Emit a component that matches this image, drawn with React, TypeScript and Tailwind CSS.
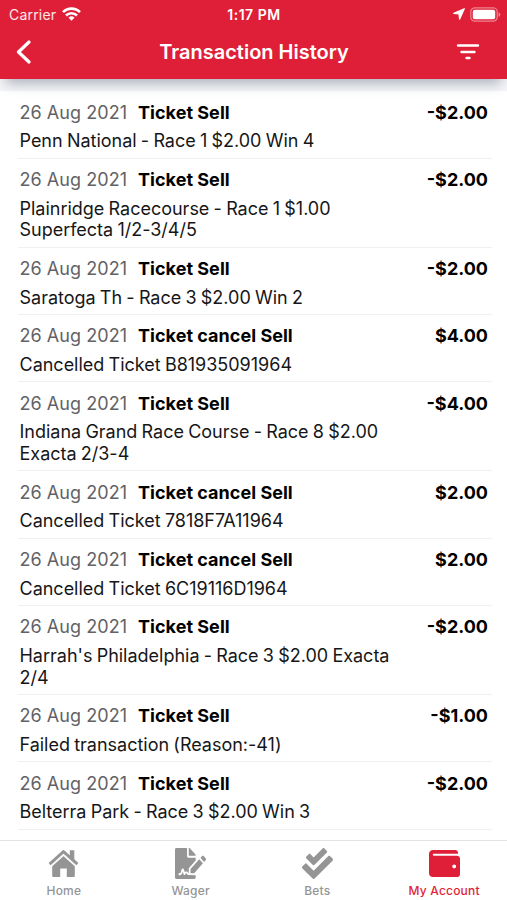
import { FaCheckDouble, FaFileSignature, FaWallet } from 'react-icons/fa'

interface Transaction {
  date: string
  type: string
  description: string
  amount: string
}

const transactions: Transaction[] = [
  { date: '26 Aug 2021', type: 'Ticket Sell', description: 'Penn National - Race 1 $2.00 Win 4', amount: '-$2.00' },
  { date: '26 Aug 2021', type: 'Ticket Sell', description: 'Plainridge Racecourse - Race 1 $1.00 Superfecta 1/2-3/4/5', amount: '-$2.00' },
  { date: '26 Aug 2021', type: 'Ticket Sell', description: 'Saratoga Th - Race 3 $2.00 Win 2', amount: '-$2.00' },
  { date: '26 Aug 2021', type: 'Ticket cancel Sell', description: 'Cancelled Ticket B81935091964', amount: '$4.00' },
  { date: '26 Aug 2021', type: 'Ticket Sell', description: 'Indiana Grand Race Course - Race 8 $2.00 Exacta 2/3-4', amount: '-$4.00' },
  { date: '26 Aug 2021', type: 'Ticket cancel Sell', description: 'Cancelled Ticket 7818F7A11964', amount: '$2.00' },
  { date: '26 Aug 2021', type: 'Ticket cancel Sell', description: 'Cancelled Ticket 6C19116D1964', amount: '$2.00' },
  { date: '26 Aug 2021', type: 'Ticket Sell', description: "Harrah's Philadelphia - Race 3 $2.00 Exacta 2/4", amount: '-$2.00' },
  { date: '26 Aug 2021', type: 'Ticket Sell', description: 'Failed transaction (Reason:-41)', amount: '-$1.00' },
  { date: '26 Aug 2021', type: 'Ticket Sell', description: 'Belterra Park - Race 3 $2.00 Win 3', amount: '-$2.00' },
]

function HomeIcon() {
  return (
    <svg width="31" height="31" viewBox="0 0 31 31" fill="currentColor">
      <path d="M4.2 16.8 15.5 6.8l11.3 10v10.9c0 .8-.5 1.3-1.3 1.3h-6.7v-8.5h-6.6V29H5.5c-.8 0-1.3-.5-1.3-1.3Z" />
      <path d="M3.2 18.2 15.5 7.2l12.3 11" fill="none" stroke="white" strokeWidth="1.3" />
      <path d="M21.8 2.2h4.5v10.6l-4.5-4Z" />
      <path d="M1.6 16.1 15.5 3.6l13.9 12.5" fill="none" stroke="currentColor" strokeWidth="2.9" strokeLinejoin="round" />
    </svg>
  )
}

const tabs = [
  { label: 'Home', icon: <HomeIcon />, active: false },
  { label: 'Wager', icon: <FaFileSignature size={31} preserveAspectRatio="none" />, active: false },
  { label: 'Bets', icon: <FaCheckDouble size={31} />, active: false },
  { label: 'My Account', icon: <FaWallet size={31} />, active: true },
]

function StatusBar() {
  return (
    <div className="grid h-7 grid-cols-3 items-center pl-[9px] pr-[8px] text-[14px] text-white">
      <div className="flex items-center gap-[6px]">
        <span className="tracking-[0.2px] text-white/90">Carrier</span>
        <svg width="19" height="14" viewBox="0 0 19 14" fill="none" stroke="currentColor" strokeWidth="2.6">
          <path d="M1 5.2a12 12 0 0 1 17 0" />
          <path d="M4 8.5a7.8 7.8 0 0 1 11 0" />
          <path d="M9.5 13.8 6.5 10.8a4.3 4.3 0 0 1 6 0Z" fill="currentColor" stroke="none" />
        </svg>
      </div>
      <span className="whitespace-nowrap text-center text-[14px] font-semibold tracking-[0.5px]">1:17 PM</span>
      <div className="-mr-[2px] flex items-center justify-end gap-[5px]">
        <svg width="12" height="12" viewBox="0 0 12 12" fill="currentColor">
          <path d="M11.3.7 6.6 11.2 6 6 .8 5.4Z" stroke="currentColor" strokeWidth="1.2" strokeLinejoin="round" />
        </svg>
        <svg width="31" height="15" viewBox="0 0 31 15" fill="none">
          <rect x=".8" y=".8" width="26.4" height="13.4" rx="4" stroke="white" strokeOpacity=".45" strokeWidth="1.2" />
          <rect x="2.8" y="2.8" width="22.4" height="9.4" rx="2" fill="white" />
          <path d="M28.6 5.2c2.2.8 2.2 3.8 0 4.6Z" fill="white" fillOpacity=".5" />
        </svg>
      </div>
    </div>
  )
}

function Header() {
  return (
    <header className="relative z-10 h-[79px] bg-[#df1f37] shadow-[0_10px_12px_-6px_rgba(40,50,70,0.36)]">
      <StatusBar />
      <div className="grid h-12 grid-cols-[1fr_auto_1fr] items-center pl-4 pr-[27px] text-white">
        <svg width="16" height="24" viewBox="0 0 16 24" fill="none" stroke="currentColor" strokeWidth="3.2" strokeLinecap="round" strokeLinejoin="round">
          <path d="M13 2 2.5 12 13 22" />
        </svg>
        <h1 className="pl-[12px] text-[20px] font-semibold">Transaction History</h1>
        <svg className="justify-self-end" width="24" height="18" viewBox="0 0 24 18" fill="none" stroke="currentColor" strokeWidth="2.4" strokeLinecap="round">
          <path d="M2 2.5h20M5.5 9h13M10.5 15h3" />
        </svg>
      </div>
    </header>
  )
}

function TransactionRow({ item }: { item: Transaction }) {
  return (
    <li className="ml-[18px] mr-[15px] border-b border-[#f0f0f2] pb-[5.7px] pl-[1.5px] pr-[4px] pt-[10px] text-black">
      <div className="flex h-[22px] items-center text-[18px]">
        <span className="w-[118.5px] tracking-[0.05px] text-[#626265]">{item.date}</span>
        <span className="flex-1 font-bold tracking-[0.03px]">{item.type}</span>
        <span className="font-bold">{item.amount}</span>
      </div>
      <p className="mt-[7px] max-w-[380px] text-[18px] leading-[21.65px] tracking-[-0.01px] text-[#161618] [word-spacing:-0.8px]">
        {item.description}
      </p>
    </li>
  )
}

export default function App() {
  return (
    <div className="flex h-[900px] w-[507px] flex-col overflow-hidden bg-white font-['Inter',sans-serif]">
      <Header />
      <main className="flex-1 overflow-hidden">
        <div className="h-[12.2px] bg-[#f4f5f8]" />
        <ul>
          {transactions.map((item, i) => (
            <TransactionRow key={i} item={item} />
          ))}
        </ul>
      </main>
      <nav className="grid h-[60px] grid-cols-4 border-t border-[#e2e2e3] bg-white">
        {tabs.map(({ label, icon, active }) => (
          <div
            key={label}
            className={`flex flex-col items-center pl-[1px] pt-[7px] ${active ? 'text-[#df1f37]' : 'text-[#959595]'}`}
          >
            {icon}
            <span className="mt-[4px] text-[12px] font-medium leading-[16px] tracking-[0.2px]">{label}</span>
          </div>
        ))}
      </nav>
    </div>
  )
}
